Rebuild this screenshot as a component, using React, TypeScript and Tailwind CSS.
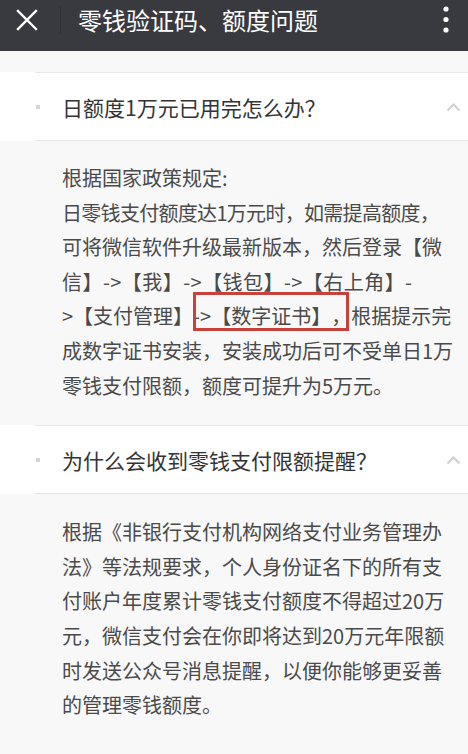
import React from "react";

const font = { fontFamily: '"Noto Sans CJK SC", "Noto Sans", sans-serif' };

function Chevron() {
  return (
    <svg width="15" height="10" viewBox="0 0 15 10" className="block">
      <path d="M1.5 8.5 L7.5 2.5 L13.5 8.5" fill="none" stroke="#cfcfcf" strokeWidth="2" />
    </svg>
  );
}

function Question({ text }: { text: string }) {
  return (
    <div className="bg-white">
      <div className="ml-[35px] border-t border-b border-[#e6e6e6] h-[69px] flex items-center">
        <div className="ml-[1px] w-[4px] h-[4px] bg-[#d4d4d4]" />
        <div className="ml-[22px] text-[21px] leading-[30px] text-[#333333] whitespace-nowrap">{text}</div>
        <div className="ml-auto mr-[7px]">
          <Chevron />
        </div>
      </div>
    </div>
  );
}

function Line({ children, className }: { children: React.ReactNode; className?: string }) {
  return <div className={"whitespace-nowrap " + (className ?? "")}>{children}</div>;
}

export default function App() {
  return (
    <div className="w-[468px] h-[754px] overflow-hidden bg-[#f8f8f8]" style={font}>
      {/* header */}
      <div className="h-[51px] bg-[#393a3f]">
        <div className="h-[40px] flex items-center">
          <svg width="22" height="22" viewBox="0 0 22 22" className="ml-[16px] block">
            <path d="M2 2 L20 20 M20 2 L2 20" stroke="#ffffff" strokeWidth="2.4" strokeLinecap="square" />
          </svg>
          <div className="ml-[22px] w-px h-[28px] bg-[#303135]" />
          <div className="ml-[17px] text-[24px] leading-[30px] text-white whitespace-nowrap">零钱验证码、额度问题</div>
          <svg width="6" height="28" viewBox="0 0 6 28" className="ml-auto mr-[19px] block">
            <circle cx="3" cy="3" r="2.6" fill="#fff" />
            <circle cx="3" cy="13.5" r="2.6" fill="#fff" />
            <circle cx="3" cy="24" r="2.6" fill="#fff" />
          </svg>
        </div>
      </div>
      <div className="h-[21px] bg-[#f8f8f8]" />

      <Question text="日额度1万元已用完怎么办？" />
      <div className="bg-[#f8f8f8] pt-[20px] pb-[22px] pl-[62px] text-[20px] leading-[34.6px] text-[#4a4a4a] [text-spacing-trim:space-all]">
        <Line>根据国家政策规定:</Line>
        <Line className="tracking-[-0.7px]">日零钱支付额度达1万元时，如需提高额度，</Line>
        <Line>可将微信软件升级最新版本，然后登录【微</Line>
        <Line className="tracking-[0.45px]">{"信】->【我】->【钱包】->【右上角】-"}</Line>
        <Line className="relative">
          {">【支付管理】->【数字证书】，根据提示完"}
          <div className="absolute left-[131px] top-[-7px] w-[156px] h-[39px] border-[3px] border-[#c8423b]" />
        </Line>
        <Line>成数字证书安装，安装成功后可不受单日1万</Line>
        <Line>零钱支付限额，额度可提升为5万元。</Line>
      </div>

      <Question text="为什么会收到零钱支付限额提醒？" />
      <div className="bg-[#f8f8f8] pt-[21px] pl-[62px] text-[20px] leading-[34.6px] text-[#4a4a4a] [text-spacing-trim:space-all]">
        <Line>根据《非银行支付机构网络支付业务管理办</Line>
        <Line>法》等法规要求，个人身份证名下的所有支</Line>
        <Line>付账户年度累计零钱支付额度不得超过20万</Line>
        <Line>元，微信支付会在你即将达到20万元年限额</Line>
        <Line>时发送公众号消息提醒，以便你能够更妥善</Line>
        <Line>的管理零钱额度。</Line>
      </div>
    </div>
  );
}
